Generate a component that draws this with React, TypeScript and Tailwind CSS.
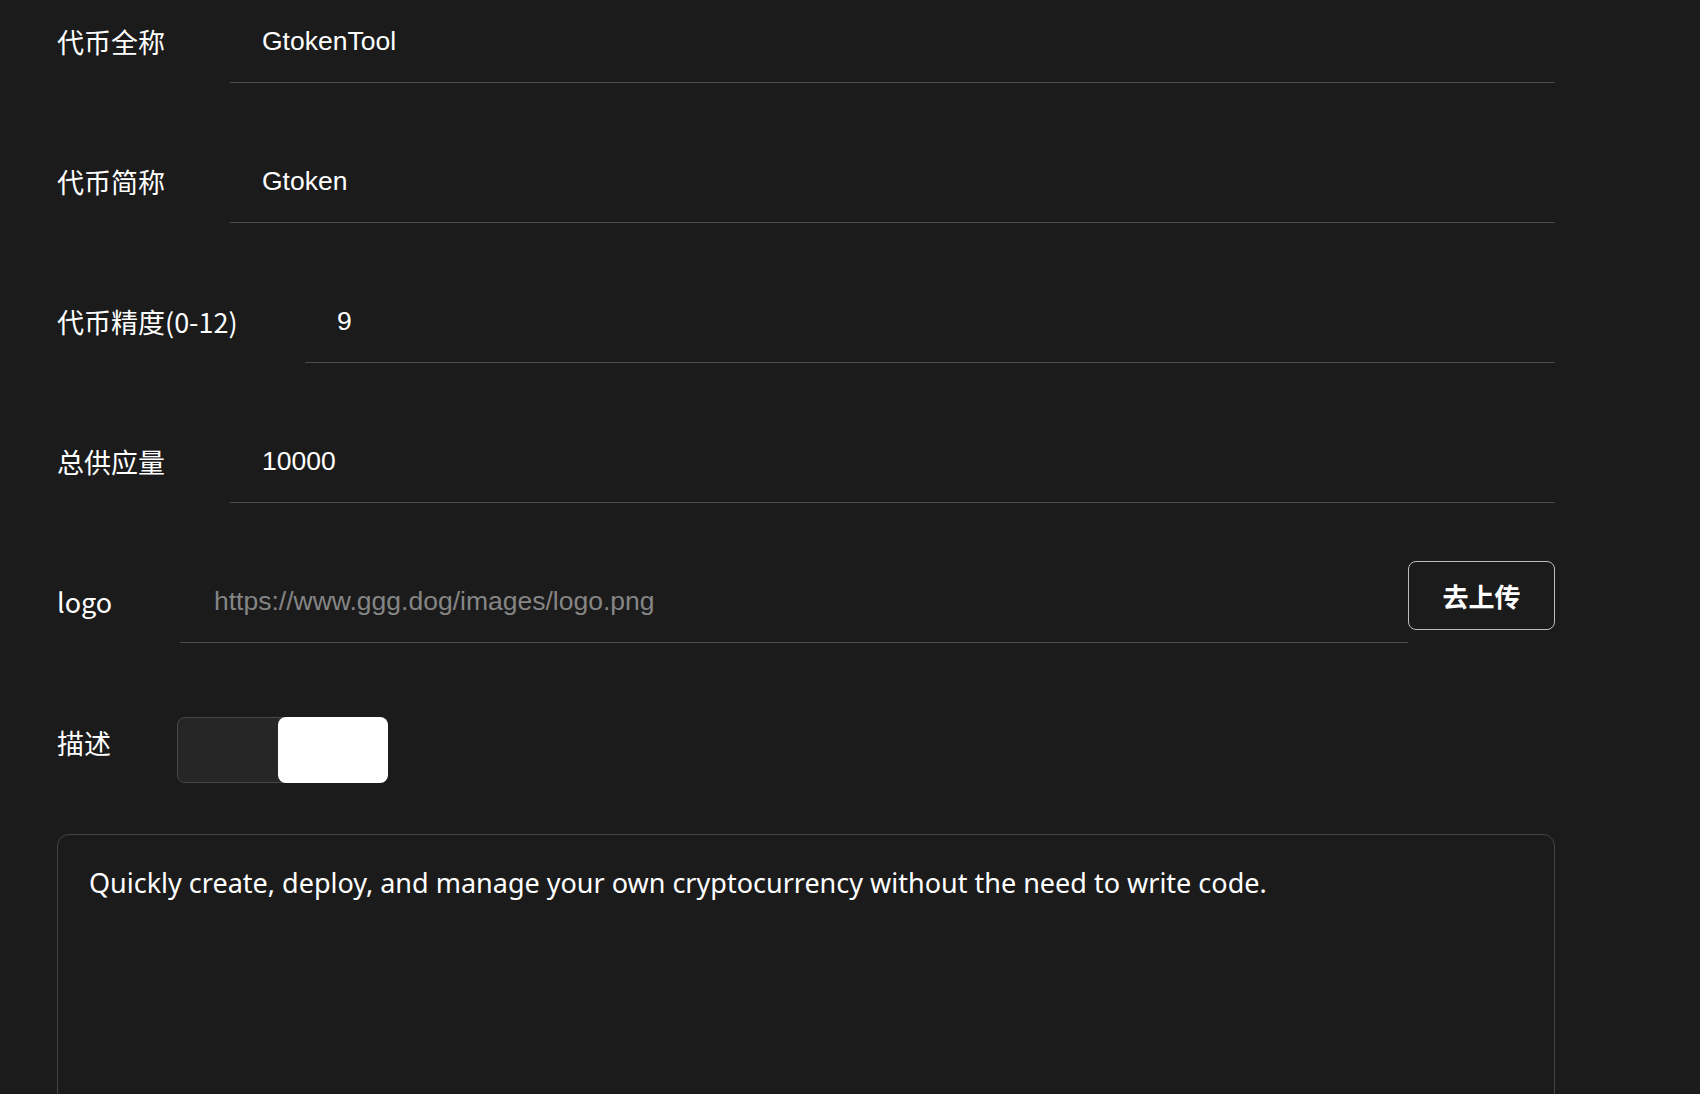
const fields = [
  { label: '代币全称', value: 'GtokenTool', labelW: 'w-[173px]' },
  { label: '代币简称', value: 'Gtoken', labelW: 'w-[173px]' },
  { label: '代币精度(0-12)', value: '9', labelW: 'w-[248px]' },
  { label: '总供应量', value: '10000', labelW: 'w-[173px]' },
];

export default function App() {
  return (
    <div className="min-h-screen bg-[#1b1b1b] text-white pl-[57px] pr-[145px]">
      <div className="flex flex-col gap-[57px]">
        {fields.map((f) => (
          <div key={f.label} className="flex items-start h-[83px]">
            <label className={`${f.labelW} shrink-0 pt-[27px] text-[27px] leading-[30px] font-['Noto_Sans_CJK_SC',sans-serif]`}>
              {f.label}
            </label>
            <div className="flex-1 h-[83px] border-b border-[#4a4a4a] pl-[32px] pt-[26px] text-[26.5px] leading-[30px] font-['Liberation_Sans',sans-serif]">
              {f.value}
            </div>
          </div>
        ))}

        {/* logo */}
        <div className="flex items-start h-[83px]">
          <label className="w-[123px] shrink-0 pt-[27px] text-[27px] leading-[30px] font-['Noto_Sans_CJK_SC',sans-serif]">
            logo
          </label>
          <div className="flex-1 h-[83px] border-b border-[#4a4a4a] pl-[34px] pt-[26px] text-[26.5px] leading-[30px] text-[#858585] font-['Liberation_Sans',sans-serif]">
            https://www.ggg.dog/images/logo.png
          </div>
          <button className="mt-px w-[147px] h-[69px] shrink-0 rounded-lg border border-[#bdbdbd] text-[26px] font-bold font-['Noto_Sans_CJK_SC',sans-serif]">
            去上传
          </button>
        </div>
      </div>

      {/* 描述 */}
      <div className="flex items-start mt-[74px]">
        <label className="w-[120px] shrink-0 pt-[11px] text-[27px] leading-[30px] font-['Noto_Sans_CJK_SC',sans-serif]">
          描述
        </label>
        <div className="flex w-[211px] h-[66px] rounded-lg border border-[#484848] bg-[#262626]">
          <div className="flex-1" />
          <div className="w-[110px] -my-px -mr-px bg-white rounded-lg" />
        </div>
      </div>

      <div className="mt-[51px] h-[300px] rounded-xl border border-[#444] px-[31px] pt-[30px] text-[27px] leading-[36px] font-['Noto_Sans',sans-serif]">
        Quickly create, deploy, and manage your own cryptocurrency without the need to write code.
      </div>
    </div>
  );
}
